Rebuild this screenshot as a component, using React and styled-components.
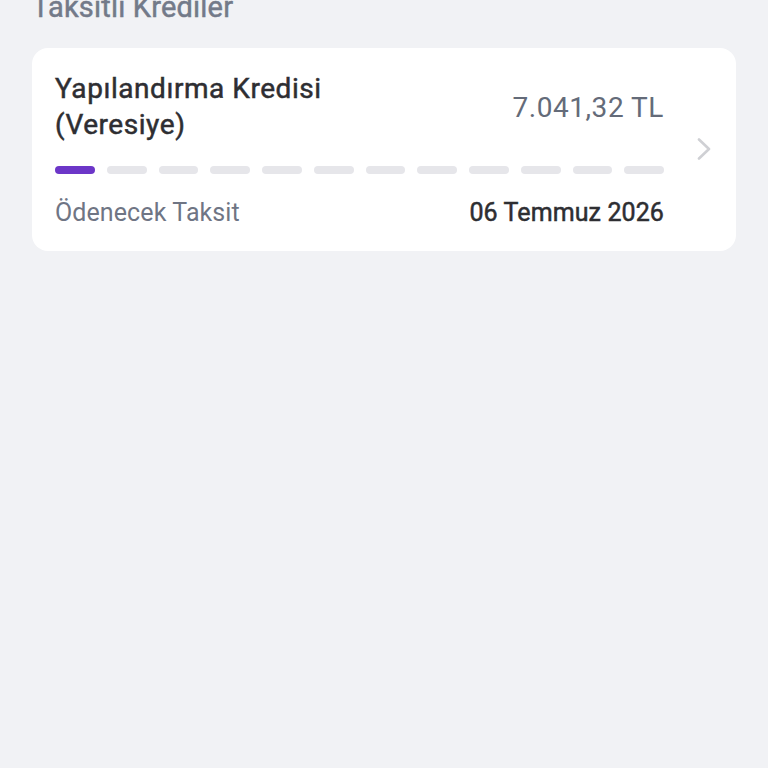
import React from 'react'
import styled, { createGlobalStyle } from 'styled-components'

const GlobalStyle = createGlobalStyle`
    html, body {
        margin: 0;
        padding: 0;
        background: #f1f2f5;
        font-family: Roboto, "Liberation Sans", sans-serif;
    }
`

const TOTAL = 12
const PAID = 1

const App = () => {
    return (
        <Page>
            <GlobalStyle />
            <SectionTitle>Taksitli Krediler</SectionTitle>
            <LoanCard>
                <CardBody>
                    <TopRow>
                        <LoanName>Yapılandırma Kredisi (Veresiye)</LoanName>
                        <Amount>7.041,32 TL</Amount>
                    </TopRow>
                    <Steps>
                        {Array.from({ length: TOTAL }).map((_, i) => (
                            <Step key={i} $active={i < PAID} />
                        ))}
                    </Steps>
                    <BottomRow>
                        <Label>Ödenecek Taksit</Label>
                        <DueDate>06 Temmuz 2026</DueDate>
                    </BottomRow>
                </CardBody>
                <Chevron viewBox="0 0 16 22" fill="none">
                    <path d="M3 1.5l10 9.5-10 9.5" stroke="#cfd0d4" strokeWidth="2.6" strokeLinecap="round" strokeLinejoin="round" />
                </Chevron>
            </LoanCard>
        </Page>
    )
}

const Page = styled.div`
    min-height: 768px;
    padding: 0 32px;
    box-sizing: border-box;
`

// Roboto here has no 500 cut, so a thin stroke on 400 stands in for "medium"
const SectionTitle = styled.div`
    margin-top: -10px;
    height: 34px;
    line-height: 34px;
    font-size: 29px;
    font-weight: 400;
    -webkit-text-stroke: 0.5px currentColor;
    letter-spacing: 0.2px;
    color: #737a89;
    margin-bottom: 24px;
`

const LoanCard = styled.div`
    background: #fff;
    border-radius: 16px;
    display: flex;
    align-items: center;
    padding: 23px 24px 24px 23px;
`

const CardBody = styled.div`
    flex: 1;
    display: flex;
    flex-direction: column;
`

const TopRow = styled.div`
    display: flex;
    align-items: center;
    justify-content: space-between;
`

const LoanName = styled.div`
    width: 320px;
    font-size: 28px;
    line-height: 36px;
    font-weight: 400;
    -webkit-text-stroke: 0.5px currentColor;
    letter-spacing: 0.55px;
    color: #2e2e32;
`

const Amount = styled.div`
    font-size: 28px;
    letter-spacing: 0.55px;
    color: #646b79;
`

const Steps = styled.div`
    display: flex;
    gap: 12px;
    margin-top: 23px;
`

const Step = styled.div`
    flex: 1;
    height: 8px;
    border-radius: 4px;
    background: ${p => (p.$active ? '#6c36c8' : '#e6e6ea')};
`

const BottomRow = styled.div`
    display: flex;
    justify-content: space-between;
    align-items: center;
    margin-top: 25px;
    line-height: 28px;
`

const Label = styled.div`
    font-size: 25px;
    letter-spacing: 0.1px;
    color: #6f7584;
`

const DueDate = styled.div`
    font-size: 25px;
    font-weight: 400;
    -webkit-text-stroke: 0.5px currentColor;
    letter-spacing: 0.1px;
    color: #2e2e32;
`

const Chevron = styled.svg`
    width: 16px;
    height: 22px;
    margin-left: 32px;
    flex-shrink: 0;
`

export default App
